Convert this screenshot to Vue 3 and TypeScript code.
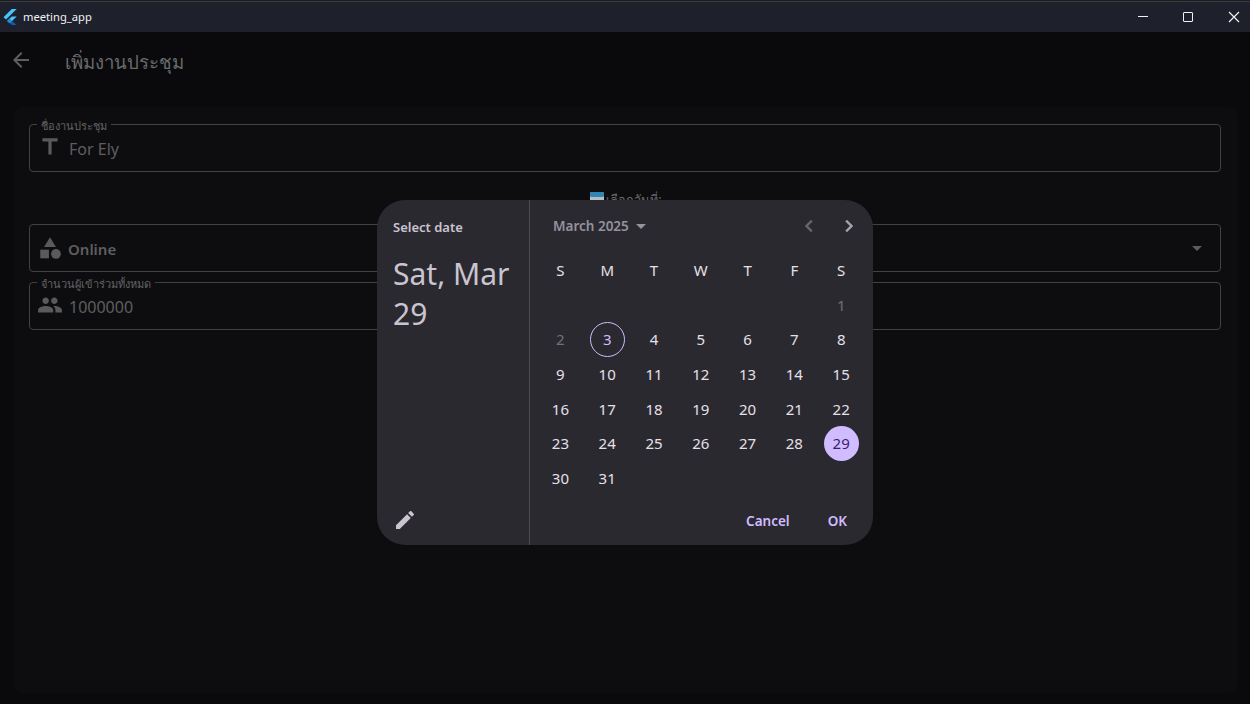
<template>
  <div class="window">
    <header class="titlebar">
      <div class="titlebar__app">
        <svg class="titlebar__logo" viewBox="0 0 14 16">
          <path d="M8.8 0h4.9L3 10.6.5 8.2z" fill="#47c5fb" />
          <path d="M13.7 7.4H8.8L4.2 11.9l2.5 2.4z" fill="#47c5fb" />
          <path d="M4.2 11.9l2.4-2.4 2.5 2.4-2.4 2.4z" fill="#1f8fd6" />
          <path d="M6.7 14.3l2.4-2.4 4.6 4.1H8.8z" fill="#0b5ea8" />
        </svg>
        <span>meeting_app</span>
      </div>
      <div class="titlebar__controls">
        <span class="win-min" />
        <span class="win-max" />
        <svg class="win-close" viewBox="0 0 12 12">
          <path d="M1 1l10 10M11 1L1 11" stroke="#f2f2f2" stroke-width="1.2" fill="none" />
        </svg>
      </div>
    </header>

    <main class="page">
      <div class="appbar">
        <svg class="appbar__back" viewBox="0 0 24 24"><path d="M20 11H7.83l5.59-5.59L12 4l-8 8 8 8 1.41-1.41L7.83 13H20v-2z" /></svg>
        <h1 class="appbar__title">เพิ่มงานประชุม</h1>
      </div>

      <section class="card">
        <div class="field">
          <span class="field__label">ชื่องานประชุม</span>
          <svg class="field__icon" viewBox="0 0 24 24"><path d="M5 4v3h5.5v12h3V7H19V4z" /></svg>
          <span class="field__value">For Ely</span>
        </div>

        <div class="date-row">
          <svg class="date-row__icon" viewBox="0 0 14 14">
            <rect width="14" height="14" rx="1.5" fill="#b9bcc4" />
            <rect width="14" height="5" rx="1.5" fill="#2f86b5" />
          </svg>
          <span>เลือกวันที่:</span>
        </div>

        <div class="field field--select">
          <svg class="field__icon" viewBox="0 0 24 24">
            <path d="M12 2l-5.5 9h11z" />
            <circle cx="17.5" cy="17.5" r="4.5" />
            <path d="M3 13.5h8v8H3z" />
          </svg>
          <span class="field__value field__value--bold">Online</span>
          <svg class="field__arrow" viewBox="0 0 24 24"><path d="M7 10l5 5 5-5z" /></svg>
        </div>

        <div class="field">
          <span class="field__label">จำนวนผู้เข้าร่วมทั้งหมด</span>
          <svg class="field__icon" viewBox="0 0 24 24">
            <path d="M16 11c1.66 0 2.99-1.34 2.99-3S17.66 5 16 5c-1.66 0-3 1.34-3 3s1.34 3 3 3zm-8 0c1.66 0 2.99-1.34 2.99-3S9.66 5 8 5C6.34 5 5 6.34 5 8s1.34 3 3 3zm0 2c-2.33 0-7 1.17-7 3.5V19h14v-2.5c0-2.33-4.67-3.5-7-3.5zm8 0c-.29 0-.62.02-.97.05 1.16.84 1.97 1.97 1.97 3.45V19h6v-2.5c0-2.33-4.67-3.5-7-3.5z" />
          </svg>
          <span class="field__value">1000000</span>
        </div>
      </section>
    </main>

    <div class="dialog">
      <aside class="dialog__side">
        <div class="dialog__help">Select date</div>
        <div class="dialog__date">Sat, Mar 29</div>
        <svg class="dialog__edit" viewBox="0 0 24 24">
          <path d="M3 17.25V21h3.75L17.81 9.94l-3.75-3.75L3 17.25zM20.71 7.04c.39-.39.39-1.02 0-1.41l-2.34-2.34c-.39-.39-1.02-.39-1.41 0l-1.83 1.83 3.75 3.75 1.83-1.83z" />
        </svg>
      </aside>

      <div class="dialog__main">
        <div class="month-bar">
          <span class="month-bar__label">March 2025</span>
          <svg class="month-bar__drop" viewBox="0 0 24 24"><path d="M7 10l5 5 5-5z" /></svg>
          <svg class="month-bar__nav month-bar__nav--off" viewBox="0 0 24 24"><path d="M15.41 7.41L14 6l-6 6 6 6 1.41-1.41L10.83 12z" /></svg>
          <svg class="month-bar__nav" viewBox="0 0 24 24"><path d="M10 6L8.59 7.41 13.17 12l-4.58 4.59L10 18l6-6z" /></svg>
        </div>

        <div class="calendar">
          <span v-for="(d, i) in weekdays" :key="i" class="calendar__cell">{{ d }}</span>
          <span
            v-for="(cell, i) in cells"
            :key="`d${i}`"
            class="calendar__cell"
          >
            <span
              v-if="cell"
              class="day"
              :class="{
                'day--off': cell === 1 || cell === 2,
                'day--today': cell === 3,
                'day--selected': cell === 29,
              }"
            >{{ cell }}</span>
          </span>
        </div>

        <div class="actions">
          <span class="actions__btn">Cancel</span>
          <span class="actions__btn">OK</span>
        </div>
      </div>
    </div>
  </div>
</template>

<script setup lang="ts">
const weekdays = ['S', 'M', 'T', 'W', 'T', 'F', 'S'];

// March 2025 starts on a Saturday
const cells: number[] = [0, 0, 0, 0, 0, 0];
for (let day = 1; day <= 31; day++) {
  cells.push(day);
}
</script>

<style>
html,
body {
  margin: 0;
  background: #0a0a0c;
}
</style>

<style scoped>
.window {
  position: relative;
  width: 1250px;
  height: 704px;
  overflow: hidden;
  display: flex;
  flex-direction: column;
  background: #0a0a0c;
  font-family: "Noto Sans", "Open Sans", sans-serif;
}

.titlebar {
  flex: none;
  height: 32px;
  box-sizing: border-box;
  padding-top: 1px;
  background: #1e202c;
  box-shadow: inset 0 1px 0 #1a1b22, inset 0 2px 0 #3d3d3f;
  display: flex;
  align-items: center;
  justify-content: space-between;
  color: #f2f2f2;
  font-size: 11.2px;
}

.titlebar__app {
  display: flex;
  align-items: center;
  gap: 6px;
  padding-left: 3px;
}

.titlebar__logo {
  width: 14px;
  height: 16px;
}

.titlebar__controls {
  display: flex;
  align-items: center;
  gap: 35px;
  padding-right: 10px;
}

.win-min {
  width: 10px;
  height: 1px;
  background: #f2f2f2;
}

.win-max {
  width: 8px;
  height: 8px;
  border: 1px solid #f2f2f2;
  border-radius: 1px;
}

.win-close {
  width: 12px;
  height: 12px;
}

.page {
  flex: 1;
  display: flex;
  flex-direction: column;
  padding: 0 12px 11px 9px;
  min-height: 0;
}

.appbar {
  flex: none;
  height: 75px;
  display: flex;
  align-items: flex-start;
  gap: 32px;
  padding-top: 16px;
  box-sizing: border-box;
}

.appbar__back {
  width: 24px;
  height: 24px;
  fill: #5f5f60;
}

.appbar__title {
  margin: 0;
  font-size: 18.6px;
  line-height: 28px;
  font-weight: 400;
  color: #6a6a6c;
}

.card {
  flex: 1;
  display: flex;
  flex-direction: column;
  margin-left: 4px;
  padding: 17px 17px 0 16px;
  background: #0d0d0f;
  border-radius: 10px;
}

.field {
  position: relative;
  height: 48px;
  box-sizing: border-box;
  border: 1px solid #424244;
  border-radius: 4px;
  display: flex;
  align-items: center;
  padding: 0 0 2px 7px;
  gap: 6px;
  flex: none;
}

.field--select {
  margin-bottom: 10px;
  padding-bottom: 0;
}

.field__label {
  position: absolute;
  left: 7px;
  top: -5px;
  padding: 0 4px;
  background: #0d0d0f;
  font-size: 11px;
  line-height: 12px;
  color: #626264;
}

.field__icon {
  width: 26px;
  height: 26px;
  fill: #5a5a5c;
  flex: none;
}

.field__value {
  position: relative;
  top: 2px;
  font-size: 16px;
  color: #5e5e60;
}

.field__value--bold {
  top: 1px;
  left: -1px;
  font-size: 15px;
  font-weight: 600;
}

.field__arrow {
  position: absolute;
  right: 11px;
  top: 11px;
  width: 24px;
  height: 24px;
  fill: #5c5c5e;
}

.date-row {
  flex: none;
  height: 52px;
  display: flex;
  align-items: flex-start;
  justify-content: center;
  gap: 2px;
  padding: 20px 0 0 2px;
  box-sizing: border-box;
  font-size: 12.5px;
  line-height: 16px;
  color: #6a6a6c;
}

.date-row__icon {
  width: 14px;
  height: 14px;
}

.dialog {
  position: absolute;
  left: 377px;
  top: 200px;
  width: 496px;
  height: 345px;
  display: flex;
  background: #2b2930;
  border-radius: 28px;
  overflow: hidden;
}

.dialog__side {
  position: relative;
  flex: none;
  width: 153px;
  box-sizing: border-box;
  border-right: 1px solid #4d4b51;
  padding: 19px 12px 0 16px;
  color: #cac4d0;
}

.dialog__help {
  font-size: 13px;
  line-height: 17px;
  font-weight: 600;
}

.dialog__date {
  margin-top: 18px;
  font-size: 30px;
  line-height: 40px;
  width: 124px;
}

.dialog__edit {
  position: absolute;
  left: 16px;
  bottom: 13px;
  width: 24px;
  height: 24px;
  fill: #cac4d0;
}

.dialog__main {
  flex: 1;
  display: flex;
  flex-direction: column;
  padding: 0 8px 0 7px;
  min-width: 0;
}

.month-bar {
  flex: none;
  height: 52.5px;
  display: flex;
  align-items: center;
  padding: 0 4px 0 16px;
}

.month-bar__label {
  font-size: 13.5px;
  font-weight: 600;
  color: #96919d;
}

.month-bar__drop {
  width: 24px;
  height: 24px;
  fill: #96919d;
  margin-right: auto;
}

.month-bar__nav {
  width: 24px;
  height: 24px;
  fill: #a5a0ab;
  stroke: #a5a0ab;
  stroke-width: 0.5;
  margin-left: 16px;
}

.month-bar__nav--off {
  fill: #67646c;
  stroke: #67646c;
}

.calendar {
  flex: none;
  display: grid;
  grid-template-columns: repeat(7, 46.8px);
  grid-auto-rows: 34.7px;
  color: #e6e0e9;
  font-size: 15px;
}

.calendar__cell {
  display: flex;
  align-items: center;
  justify-content: center;
}

.day {
  width: 35px;
  height: 35px;
  box-sizing: border-box;
  border-radius: 50%;
  display: flex;
  align-items: center;
  justify-content: center;
}

.day--off {
  color: #736f78;
}

.day--today {
  border: 1px solid #d0bcff;
  color: #d0bcff;
}

.day--selected {
  background: #d0bcff;
  color: #381e72;
}

.actions {
  margin-top: auto;
  display: flex;
  justify-content: flex-end;
  gap: 38px;
  padding: 0 18px 15px 0;
}

.actions__btn {
  font-size: 13.5px;
  line-height: 18px;
  font-weight: 600;
  color: #d0bcff;
}
</style>
